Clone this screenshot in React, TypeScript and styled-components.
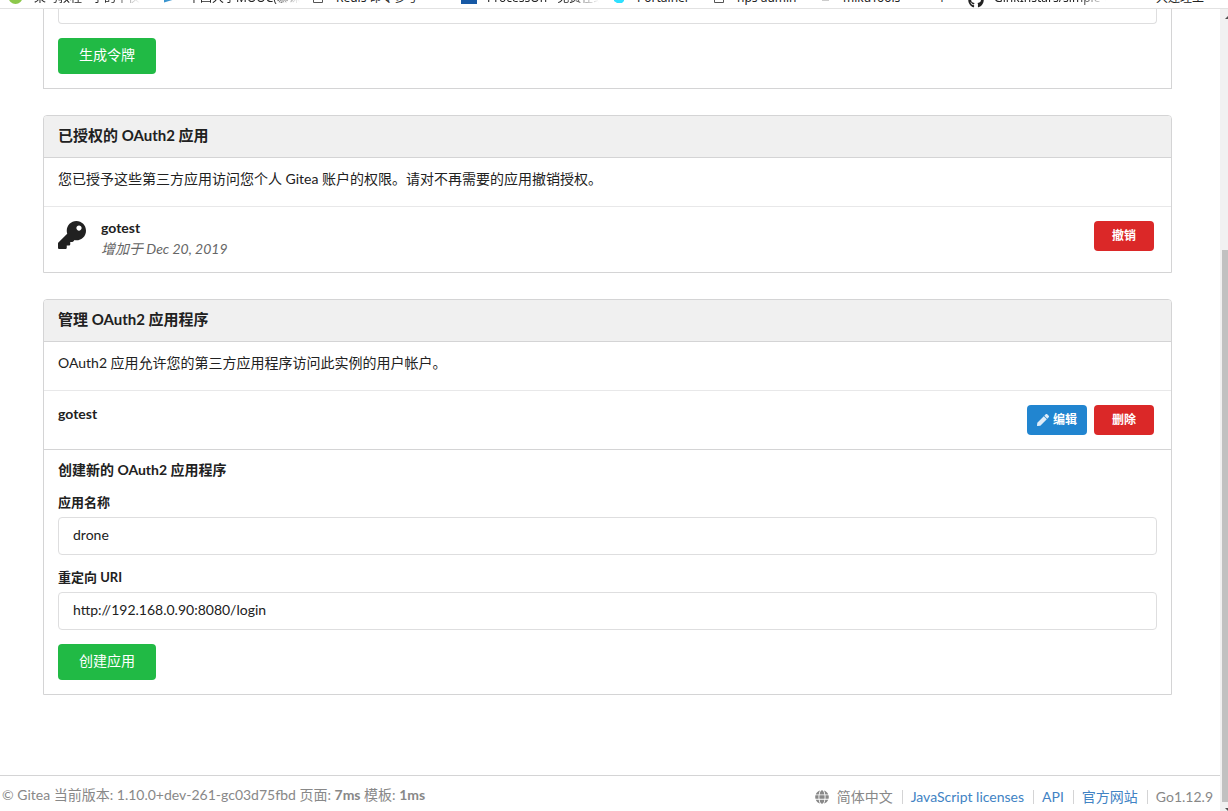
import React from "react";
import styled, { createGlobalStyle } from "styled-components";
import { FaGlobe, FaKey, FaPen, FaGithub } from "react-icons/fa";

const line = "#d4d4d5";
const ink = "#212121";

const GlobalStyle = createGlobalStyle`
  *, *::before, *::after { box-sizing: border-box; }
  body {
    margin: 0;
    background: #fff;
    color: ${ink};
    font-family: Lato, "Noto Sans CJK SC", sans-serif;
    font-size: 14px;
    line-height: 20px;
  }
  input, button { font-family: inherit; }
`;

const Window = styled.div`
  display: flex;
  flex-direction: column;
  min-height: 100vh;
`;

const BookmarkBar = styled.nav`
  display: flex;
  align-items: flex-end;
  height: 9px;
  padding-left: 8px;
  overflow: hidden;
  border-bottom: 1px solid #e2e2e2;
`;

const Bookmark = styled.a<{ $width: number }>`
  display: flex;
  flex: none;
  gap: 10px;
  align-items: flex-end;
  width: ${(p) => p.$width}px;
  color: #222;
  text-decoration: none;
  font-family: "Noto Sans", "Noto Sans CJK SC", sans-serif;
  font-size: 12px;
  line-height: 16px;
  white-space: nowrap;

  svg { flex: none; }
`;

const BookmarkName = styled.span<{ $fade?: boolean }>`
  height: 16px;
  margin-bottom: 2px;
  overflow: hidden;
  max-width: 112px;
  ${(p) => p.$fade && "mask-image: linear-gradient(to right, #000 75%, transparent);"}
`;

const Viewport = styled.div`
  display: flex;
  flex: 1;
`;

const Page = styled.div`
  display: flex;
  flex: 1;
  flex-direction: column;
  min-width: 0;
`;

const Main = styled.main`
  display: flex;
  flex: 1;
  flex-direction: column;
  gap: 26px;
  padding: 0 48px 80px 43px;
`;

const Panel = styled.section`
  border: 1px solid ${line};
  border-radius: 4px 4px 0 0;
`;

const TokenPanel = styled(Panel)`
  border-top: 0;
  border-radius: 0;
  padding: 0 14px 14px;
`;

const PanelTitle = styled.h4`
  margin: 0;
  padding: 9px 14px 11px;
  background: #f0f0f0;
  border-bottom: 1px solid ${line};
  border-radius: 3px 3px 0 0;
  font-size: 15px;
  line-height: 21px;
`;

const Description = styled.p`
  margin: 0;
  padding: 11px 14px 17px;
`;

const AppRow = styled.div`
  display: flex;
  align-items: flex-start;
  padding: 14px 17px 14px 14px;
  border-top: 1px solid #e8e8e9;
`;

const AppInfo = styled.div<{ $indent?: number }>`
  flex: 1;
  margin-left: ${(p) => p.$indent ?? 0}px;
`;

const AppName = styled.strong`
  display: block;
  line-height: 17px;
`;

const AuthorizedName = styled(AppName)`
  line-height: 14px;
`;

const AppDate = styled.i`
  display: block;
  padding-top: 5px;
  line-height: 18px;
  color: #666;
`;

const Actions = styled.div`
  display: flex;
  gap: 7px;
`;

const SmallButton = styled.button<{ $color: string }>`
  display: flex;
  align-items: center;
  justify-content: center;
  gap: 4px;
  width: 60px;
  height: 30px;
  padding: 0;
  border: 0;
  border-radius: 4px;
  background: ${(p) => p.$color};
  color: #fff;
  font-size: 12px;
  font-weight: 700;
  line-height: 12px;

  svg { opacity: 0.85; }
`;

const GreenButton = styled.button`
  display: block;
  height: 36px;
  margin-top: 14px;
  padding: 0 21px 2px;
  border: 0;
  border-radius: 4px;
  background: #21ba45;
  color: #fff;
  font-size: 14px;
  line-height: 14px;
`;

const AppForm = styled.form`
  padding: 10px 14px 14px;
  border-top: 1px solid ${line};
`;

const FormTitle = styled.h5`
  margin: 0;
  font-size: 14px;
`;

const Field = styled.div`
  margin-top: 12px;
`;

const Label = styled.label`
  display: block;
  margin-bottom: 5px;
  font-size: 13px;
  font-weight: 700;
`;

const TextInput = styled.input`
  display: block;
  width: 100%;
  height: 38px;
  padding: 0 14px 3px;
  border: 1px solid #dededf;
  border-radius: 4px;
  background: #fff;
  color: ${ink};
  font-size: 14px;
  outline: 0;
`;

const TokenInput = styled(TextInput)`
  height: 15px;
  border-top: 0;
  border-radius: 0 0 4px 4px;
`;

const Footer = styled.footer`
  display: flex;
  justify-content: space-between;
  padding: 9px 7px 6px 2px;
  border-top: 1px solid ${line};
  color: #888;
`;

const FooterLinks = styled.div`
  display: flex;
  align-items: center;
  padding-top: 2px;

  > * + * {
    margin-left: 9px;
    padding-left: 8px;
    border-left: 1px solid ${line};
    line-height: 14px;
  }
`;

const Language = styled.span`
  display: flex;
  align-items: center;
  gap: 8px;
`;

const FooterLink = styled.a`
  color: #4183c4;
  text-decoration: none;
`;

const ScrollTrack = styled.div`
  display: flex;
  flex: none;
  flex-direction: column;
  width: 8px;
  padding-left: 2px;
  background: #f1f1f1;
`;

const ScrollThumb = styled.div`
  flex: 1;
  margin: 224px 0 0;
  background: #c1c1c1;
`;

const ScrollArrow = ({ down }: { down?: boolean }) => (
  <svg width="6" height={down ? 11 : 17} viewBox={down ? "0 0 6 11" : "0 0 6 17"}>
    <path d={down ? "M3 6h3v3z" : "M3 10l3-3v3z"} fill="#505050" />
  </svg>
);

const FileIcon = () => (
  <svg width="16" height="16" viewBox="0 0 16 16">
    <path d="M3.5 1.5h6l3 3v6h-9z" fill="none" stroke="#555" />
  </svg>
);

const bookmarks: { name: string; width: number; fade?: boolean; icon?: React.ReactNode }[] = [
  { name: "菜鸟教程 - 学的不仅", width: 154, fade: true, icon: <svg width="16" height="16"><circle cx="7.500" cy="5" r="7" fill="#8cc84b" /></svg> },
  { name: "中国大学MOOC(慕课", width: 148, fade: true, icon: <svg width="16" height="16"><path d="M2 2v8.500L12 7.500V2z" fill="#3a95cf" /></svg> },
  { name: "Redis 命令参考", width: 151, icon: <FileIcon /> },
  { name: "ProcessOn - 免费在线", width: 150, fade: true, icon: <svg width="16" height="16"><path d="M0 0h16v12H0z" fill="#1759a5" /></svg> },
  { name: "Portainer", width: 100, icon: <svg width="16" height="16"><path d="M3 2h10v7l-2 2H6L3 9z" fill="#2fe0ff" /></svg> },
  { name: "nps admin", width: 106, icon: <FileIcon /> },
  { name: "mikuTools", width: 119, icon: <svg width="16" height="16"><path d="M5 3h7v6H5z" fill="#ccc" /></svg> },
  { name: "个", width: 32 },
  { name: "GinkInstars/simple-ui", width: 162, fade: true, icon: <FaGithub size={16} /> },
  { name: "大连理工", width: 100, icon: <svg width="16" height="16" /> },
];

export default function App() {
  return (
    <Window>
      <GlobalStyle />
      <BookmarkBar>
        {bookmarks.map((b) => (
          <Bookmark key={b.name} href="#" $width={b.width}>
            {b.icon}
            <BookmarkName $fade={b.fade}>{b.name}</BookmarkName>
          </Bookmark>
        ))}
      </BookmarkBar>
      <Viewport>
        <Page>
          <Main>
            <TokenPanel>
              <TokenInput aria-label="令牌名称" />
              <GreenButton type="button">生成令牌</GreenButton>
            </TokenPanel>

            <Panel>
              <PanelTitle>已授权的 OAuth2 应用</PanelTitle>
              <Description>您已授予这些第三方应用访问您个人 Gitea 账户的权限。请对不再需要的应用撤销授权。</Description>
              <AppRow>
                <FaKey size={28} />
                <AppInfo $indent={15}>
                  <AuthorizedName>gotest</AuthorizedName>
                  <AppDate>增加于 Dec 20, 2019</AppDate>
                </AppInfo>
                <SmallButton type="button" $color="#db2828">撤销</SmallButton>
              </AppRow>
            </Panel>

            <Panel>
              <PanelTitle>管理 OAuth2 应用程序</PanelTitle>
              <Description>OAuth2 应用允许您的第三方应用程序访问此实例的用户帐户。</Description>
              <AppRow>
                <AppInfo>
                  <AppName>gotest</AppName>
                </AppInfo>
                <Actions>
                  <SmallButton type="button" $color="#2185d0">
                    <FaPen size={12} />
                    编辑
                  </SmallButton>
                  <SmallButton type="button" $color="#db2828">删除</SmallButton>
                </Actions>
              </AppRow>
              <AppForm>
                <FormTitle>创建新的 OAuth2 应用程序</FormTitle>
                <Field>
                  <Label htmlFor="app-name">应用名称</Label>
                  <TextInput id="app-name" defaultValue="drone" />
                </Field>
                <Field>
                  <Label htmlFor="redirect-uri">重定向 URI</Label>
                  <TextInput id="redirect-uri" defaultValue="http://192.168.0.90:8080/login" />
                </Field>
                <GreenButton type="button">创建应用</GreenButton>
              </AppForm>
            </Panel>
          </Main>
          <Footer>
            <div>
              © Gitea 当前版本: 1.10.0+dev-261-gc03d75fbd 页面: <strong>7ms</strong> 模板: <strong>1ms</strong>
            </div>
            <FooterLinks>
              <Language>
                <FaGlobe size={14} />
                简体中文
              </Language>
              <FooterLink href="#">JavaScript licenses</FooterLink>
              <FooterLink href="#">API</FooterLink>
              <FooterLink href="#">官方网站</FooterLink>
              <span>Go1.12.9</span>
            </FooterLinks>
          </Footer>
        </Page>
        <ScrollTrack>
          <ScrollArrow />
          <ScrollThumb />
          <ScrollArrow down />
        </ScrollTrack>
      </Viewport>
    </Window>
  );
}
